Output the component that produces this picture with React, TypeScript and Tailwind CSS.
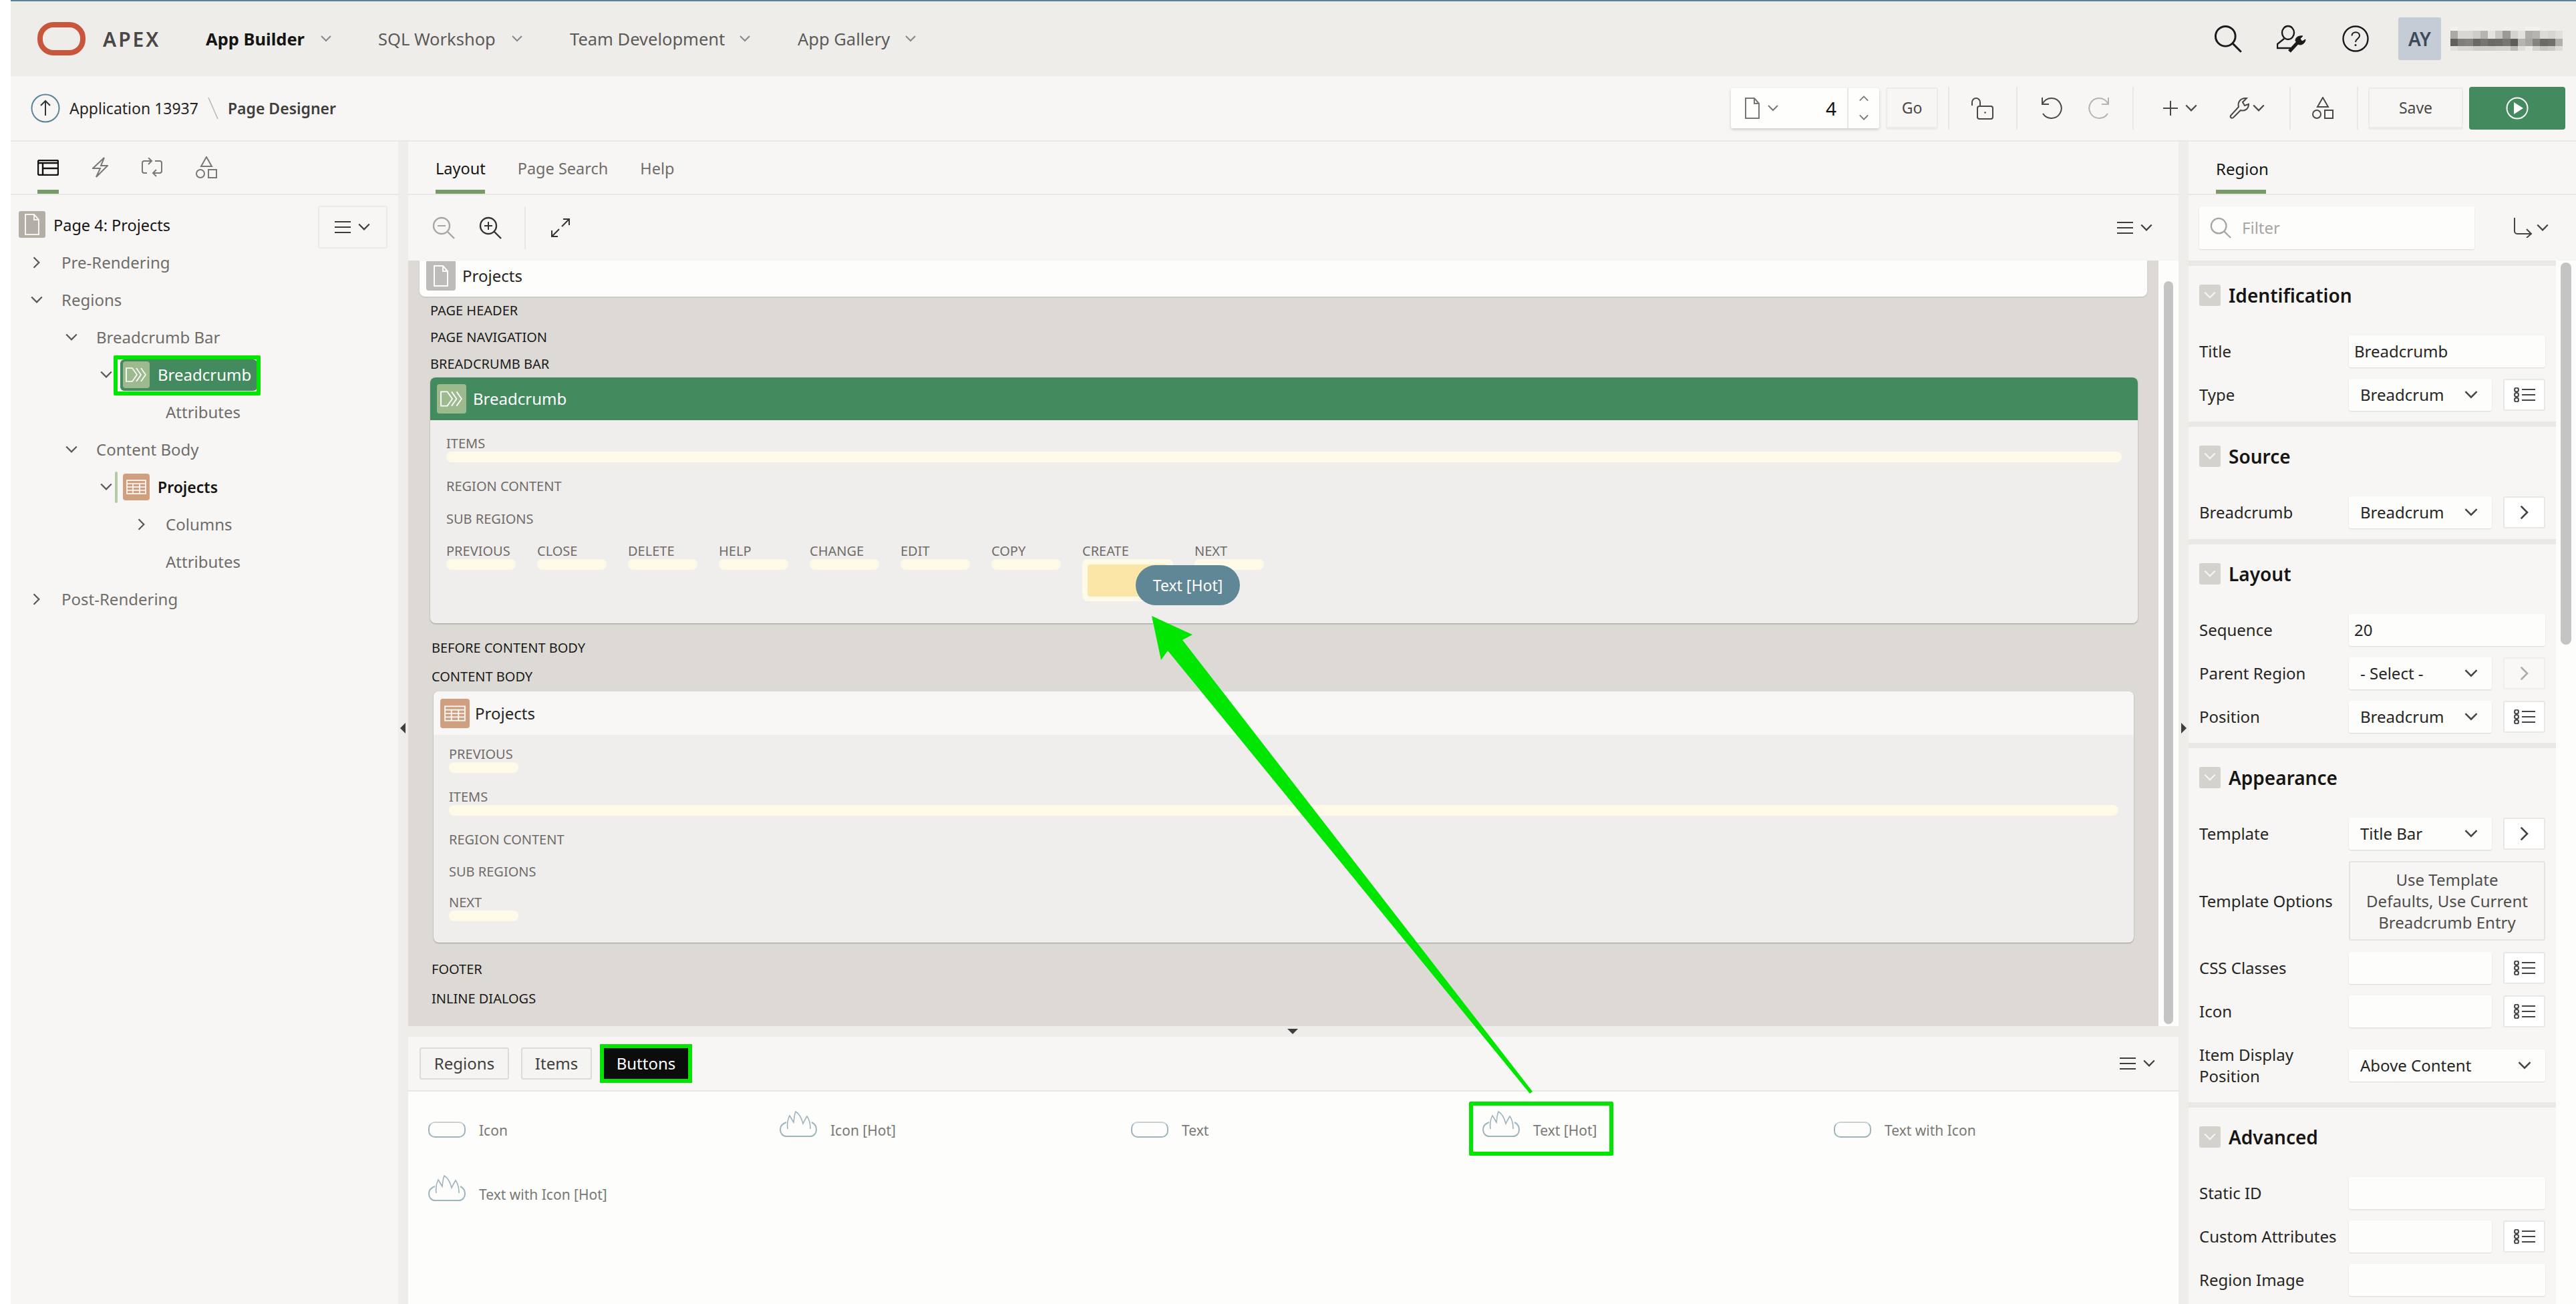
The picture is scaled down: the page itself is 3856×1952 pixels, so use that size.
import type { ReactNode } from 'react';

const FONT = "font-['Noto_Sans','Open_Sans',sans-serif]";

const Chev = ({ dir = 'down', className = '' }: { dir?: 'down' | 'up' | 'right'; className?: string }) => {
  const pts = dir === 'down' ? '2,5 9,12 16,5' : dir === 'up' ? '2,12 9,5 16,12' : '5,2 12,9 5,16';
  return (
    <svg viewBox="0 0 18 18" className={`shrink-0 ${className}`} fill="none" stroke="currentColor" strokeWidth="2">
      <polyline points={pts} />
    </svg>
  );
};

const MenuIcon = () => (
  <span className="flex items-center gap-[10px] text-[#3f3e3c]">
    <svg viewBox="0 0 24 20" className="h-[20px] w-[24px]" stroke="currentColor" strokeWidth="2">
      <path d="M0 2h24M0 10h24M0 18h24" />
    </svg>
    <Chev className="h-[20px] w-[20px]" />
  </span>
);

const ListIcon = () => (
  <svg viewBox="0 0 32 22" className="h-[22px] w-[32px] text-[#444]" fill="none" stroke="currentColor" strokeWidth="2">
    <circle cx="4" cy="3.5" r="3" />
    <circle cx="4" cy="11" r="3" />
    <circle cx="4" cy="18.5" r="3" />
    <path d="M12 3h20M12 11h20M12 19h20" />
  </svg>
);

const FileGlyph = ({ className = '' }: { className?: string }) => (
  <svg viewBox="0 0 24 32" className={className} fill="none" stroke="currentColor" strokeWidth="2">
    <path d="M2 1h13l7 8v22H2z" />
    <path d="M15 1v8h7" />
  </svg>
);

const ChevronsGlyph = ({ className = '' }: { className?: string }) => (
  <svg viewBox="0 0 32 22" className={className} fill="none" stroke="#fff" strokeWidth="1.7">
    <path d="M10 1H1v20h9l7-10z" />
    <path d="M16 1l7 10-7 10M23 1l7 10-7 10" />
  </svg>
);

const TableGlyph = ({ className = '' }: { className?: string }) => (
  <svg viewBox="0 0 30 22" className={className} fill="none" stroke="#fff" strokeWidth="1.6">
    <rect x="1" y="1" width="28" height="20" />
    <path d="M1 6h28M1 11h28M1 16h28M10 6v15M20 6v15" />
  </svg>
);

const ShapesIcon = ({ className = '' }: { className?: string }) => (
  <svg viewBox="0 0 32 34" className={className} fill="none" stroke="currentColor" strokeWidth="2">
    <path d="M16 1l8 14H8z" />
    <circle cx="7" cy="26" r="6" />
    <rect x="19" y="20" width="12" height="12" />
  </svg>
);

const Flame = () => (
  <svg viewBox="0 0 56 40" className="h-[40px] w-[56px] shrink-0" fill="none" stroke="#9db4bc" strokeWidth="2">
    <path d="M10 17 C4 19 1 23 1 28 C1 34 5 38 10 38 H46 C51 38 55 34 55 28 C55 23 52 19 48 17" />
    <path d="M12 27 C11 20 12 13 15 7 C17 10 19 14 21 17 C22 10 22 5 24 1 C29 4 33 11 35 19 C37 15 39 11 41 8 C44 12 46 18 46 27" strokeWidth="1.6" />
  </svg>
);

const Pill = () => <span className="block h-[24px] w-[56px] shrink-0 rounded-[10px] border-2 border-[#9db4bc] border-t-[#c5d3d8]" />;

const SearchIcon = ({ className = '', children }: { className?: string; children?: ReactNode }) => (
  <svg viewBox="0 0 34 34" className={className} fill="none" stroke="currentColor" strokeWidth="2.4">
    <circle cx="14" cy="14" r="12" />
    <path d="M23 23l10 10" />
    {children}
  </svg>
);

const Divider = ({ className = '' }: { className?: string }) => <span className={`h-[64px] w-[2px] shrink-0 bg-[#e8e7e4] ${className}`} />;

const Slot = ({ label, wide }: { label: string; wide?: boolean }) => (
  <div className={`flex flex-col ${wide ? 'w-[136px]' : 'w-[104px]'}`}>
    <span className="text-[20px] leading-[24px] text-[#6f6c68]">{label}</span>
    <span className={`block rounded-[8px] bg-[#fff9e8] ${wide ? 'h-[63px] p-[8px]' : 'h-[16px]'}`}>
      {wide && <span className="block h-[48px] w-[120px] rounded-[4px] bg-[#fbe6a8]" />}
    </span>
  </div>
);

const CanvasLabel = ({ children, className = '' }: { children: ReactNode; className?: string }) => (
  <div className={`flex h-[40px] items-center text-[20px] text-[#1a1a1a] ${className}`}>{children}</div>
);

const Section = ({ title, children, className = 'pb-[16px]' }: { title: string; children: ReactNode; className?: string }) => (
  <section className={`mb-[8px] bg-[#f7f6f4] px-[16px] ${className}`}>
    <div className="flex h-[104px] items-start gap-[12px] pt-[28px]">
      <span className="flex h-[32px] w-[32px] items-center justify-center rounded-[3px] bg-[#d4d2cd] text-[#f5f4f2]">
        <Chev className="h-[20px] w-[20px]" />
      </span>
      <h2 className="text-[28px] leading-[32px] font-semibold text-[#161513]">{title}</h2>
    </div>
    <div className="flex flex-col gap-[17px]">{children}</div>
  </section>
);

type Side = 'list' | 'go' | 'goOff';

const SideBtn = ({ kind }: { kind: Side }) => (
  <span className={`flex h-[48px] w-[63px] shrink-0 items-center justify-center rounded-[3px] border-2 ${kind === 'goOff' ? 'border-[#efeeeb] bg-[#f9f8f6] text-[#aaa]' : 'border-[#e8e7e4] bg-white text-[#444]'}`}>
    {kind === 'list' ? <ListIcon /> : <Chev dir="right" className="h-[24px] w-[24px]" />}
  </span>
);

const Field = ({ label, value = '', select, side, className = 'h-[48px]' }: { label: ReactNode; value?: string; select?: boolean; side?: Side; className?: string }) => (
  <div className={`flex items-center text-[24px] ${className}`}>
    <span className="w-[224px] shrink-0 leading-[32px] text-[#262523]">{label}</span>
    <div className="flex flex-1 items-center gap-[17px]">
      <div className={`flex h-[48px] flex-1 items-center justify-between rounded-[3px] bg-[#fdfdfb] shadow-[0_1px_2px_rgba(0,0,0,0.12)] ${select ? 'pr-[20px] pl-[17px]' : 'pl-[8px]'}`}>
        <span className="text-[#262523]">{value}</span>
        {select && <Chev className="h-[22px] w-[22px] text-[#444]" />}
      </div>
      {side && <SideBtn kind={side} />}
    </div>
  </div>
);

const TreeRow = ({ indent, chev, gutter = 'w-[52px]', children }: { indent: number; chev?: 'right' | 'down'; gutter?: string; children: ReactNode }) => (
  <div className="flex h-[56px] items-center" style={{ paddingLeft: indent }}>
    <span className={`flex shrink-0 items-center ${gutter}`}>
      {chev && <Chev dir={chev} className="ml-[5px] h-[20px] w-[20px] text-[#5a5856]" />}
    </span>
    {children}
  </div>
);

const NavItem = ({ label, width, labelWidth, active }: { label: string; width: string; labelWidth: string; active?: boolean }) => (
  <div className={`flex items-center ${width}`}>
    <span className={`whitespace-nowrap ${labelWidth} ${active ? 'font-bold text-[#161513]' : 'text-[#5c5a57]'}`}>{label}</span>
    <Chev className="h-[18px] w-[18px] text-[#8a8886]" />
  </div>
);

const GalleryItem = ({ label, hot }: { label: string; hot?: boolean }) => (
  <div className="flex h-[96px] items-center gap-[20px] text-[21px] text-[#7a7875]">
    <span className="flex h-[42px] w-[56px] items-end">{hot ? <Flame /> : <Pill />}</span>
    <span className="mt-[22px]">{label}</span>
  </div>
);

// blurred user name, four rows of mosaic cells
const mosaic: { h: string; cells: string[] }[] = [
  { h: 'h-[6px]', cells: ['#f3f2ef', '#efeeeb', '#efeeeb', '#f0efec', '#efeeeb', '#eeedea', '#eeedea', '#f0efec', '#efeeeb', '#eeedea', '#f3f2ef', '#f3f2ef', '#eeedea', '#eeedea', '#eeedea'] },
  { h: 'h-[12px]', cells: ['#aaa9a5', '#d8d7d4', '#d8d7d4', '#cdccc9', '#b5b4b0', '#e4e3e0', '#c8c7c4', '#9b9a96', '#d4d3d0', '#e2e1de', '#aeada9', '#b5b4b0', '#dcdbd8', '#d6d5d2', '#e0dfdc'] },
  { h: 'h-[11px]', cells: ['#625f5c', '#807e7b', '#858380', '#6a6865', '#777572', '#6c6a67', '#6e6c69', '#787673', '#5f5d5a', '#b5b4b0', '#a8a7a3', '#858380', '#6c6a67', '#727069', '#b0afab'] },
  { h: 'h-[7px]', cells: ['#e2e1de', '#d8d7d4', '#d8d7d4', '#cfcecb', '#d0cfcc', '#d0cfcc', '#d4d3d0', '#d4d3d0', '#bcbbb7', '#e0dfdc', '#eaeae6', '#d4d3d0', '#c6c5c2', '#cdccc9', '#dedddA'] },
];

export default function App() {
  return (
    <div className={`relative flex h-[1952px] w-[3856px] flex-col overflow-hidden bg-white pl-[16px] ${FONT}`}>
      <div className="h-[2px] shrink-0 bg-[#5a8598]" />

      {/* top nav */}
      <header className="flex h-[112px] shrink-0 items-center bg-[#eeedea] pr-[20px] pl-[40px] text-[25.5px]">
        <svg viewBox="0 0 72 50" className="h-[50px] w-[72px]" fill="none" stroke="#c9553a" strokeWidth="8">
          <rect x="4" y="4" width="64" height="42" rx="20" />
        </svg>
        <span className="ml-[26px] w-[154px] text-[30px] font-semibold tracking-[3px] text-[#4a4846]">APEX</span>
        <div className="flex">
          <NavItem label="App Builder" width="w-[258px]" labelWidth="w-[171px]" active />
          <NavItem label="SQL Workshop" width="w-[287px]" labelWidth="w-[199px]" />
          <NavItem label="Team Development" width="w-[341px]" labelWidth="w-[253px]" />
          <NavItem label="App Gallery" width="w-[180px]" labelWidth="w-[160px]" />
        </div>
        <div className="ml-auto flex items-center text-[#1b1a18]">
          <SearchIcon className="h-[42px] w-[42px]" />
          <svg viewBox="0 0 44 42" className="ml-[52px] h-[42px] w-[44px]" fill="none" stroke="currentColor" strokeWidth="2.4">
            <ellipse cx="17" cy="12" rx="9" ry="10" />
            <path d="M11 21L1 29v6h20" />
            <path d="M19 40L32 26" strokeWidth="5" />
            <path d="M28 24C28 19 33 16 39 17L35 21L38 25L43 22C43 28 36 32 32 29z" fill="currentColor" strokeWidth="1" />
          </svg>
          <svg viewBox="0 0 40 40" className="ml-[54px] h-[40px] w-[40px]" fill="none" stroke="currentColor" strokeWidth="2.4">
            <circle cx="20" cy="20" r="18.5" />
            <path d="M14.5 15.5c0-7 11.5-7 11.5 0 0 4.5-6 4.5-6 9.5" strokeWidth="2" />
            <circle cx="20" cy="29.5" r="1.5" fill="currentColor" stroke="none" />
          </svg>
          <span className="ml-[44px] flex h-[64px] w-[64px] items-center justify-center rounded-[3px] bg-[#c5ccd5] text-[28px] font-semibold text-[#3d4a5a]">AY</span>
          <span className="ml-[14px] flex w-[168px] flex-col">
            {mosaic.map((row, r) => (
              <span key={r} className={`flex ${row.h}`}>
                {row.cells.map((c, i) => (
                  <span key={i} className="h-full flex-1" style={{ background: c }} />
                ))}
              </span>
            ))}
          </span>
        </div>
      </header>

      {/* page designer toolbar */}
      <div className="flex h-[98px] shrink-0 items-center border-b-2 border-[#e8e7e4] bg-[#f7f6f4] pr-[16px] pl-[30px] text-[23px]">
        <svg viewBox="0 0 44 44" className="h-[44px] w-[44px]" fill="none" strokeWidth="2">
          <circle cx="22" cy="22" r="20.5" stroke="#5a8598" />
          <path d="M22 33V11M15 18l7-7 7 7" stroke="#333" />
        </svg>
        <span className="ml-[14px] text-[#262523]">Application 13937</span>
        <svg viewBox="0 0 16 32" className="mx-[14px] h-[32px] w-[16px]" stroke="#b9b7b3" strokeWidth="1.5">
          <path d="M1 0l14 32" />
        </svg>
        <span className="font-semibold text-[#3f3e3c]">Page Designer</span>

        <div className="ml-auto flex items-center text-[#4a4846]">
          <div className="flex h-[60px] w-[222px] items-center rounded-[3px] bg-[#fefefd] shadow-[0_2px_4px_rgba(0,0,0,0.18)]">
            <FileGlyph className="ml-[20px] h-[32px] w-[24px] text-[#777]" />
            <Chev className="ml-[10px] h-[18px] w-[18px] text-[#777]" />
            <span className="mr-[16px] ml-auto text-[28px] text-[#111]">4</span>
            <span className="flex h-full w-[48px] flex-col items-center justify-center gap-[12px] border-l-2 border-[#e8e7e4] text-[#777]">
              <Chev dir="up" className="h-[16px] w-[16px]" />
              <Chev className="h-[16px] w-[16px]" />
            </span>
          </div>
          <button className="ml-[10px] h-[63px] w-[78px] rounded-[3px] border-2 border-b-4 border-[#ecebe8] text-[23px]">Go</button>
          <Divider className="ml-[15px]" />
          <svg viewBox="0 0 33 33" className="ml-[33px] h-[33px] w-[33px]" fill="none" stroke="currentColor" strokeWidth="2">
            <rect x="9" y="13" width="23" height="19" rx="3" />
            <path d="M1 12V7a6 6 0 0 1 12 0v6" />
            <circle cx="20.5" cy="22.5" r="1.3" fill="currentColor" stroke="none" />
          </svg>
          <Divider className="ml-[34px]" />
          <svg viewBox="0 0 32 32" className="ml-[36px] h-[32px] w-[32px]" fill="none" stroke="currentColor" strokeWidth="2">
            <path d="M1 10C4 4 9 1 15 1A15 15 0 1 1 2 24" />
            <path d="M1 0v10h10" />
          </svg>
          <svg viewBox="0 0 32 32" className="ml-[37px] h-[32px] w-[32px] text-[#b5b3b0]" fill="none" stroke="currentColor" strokeWidth="2">
            <path d="M31 10C28 4 23 1 17 1A15 15 0 1 0 30 24" />
            <path d="M31 0v10H21" />
          </svg>
          <Divider className="ml-[35px]" />
          <svg viewBox="0 0 22 22" className="ml-[44px] h-[22px] w-[22px]" stroke="currentColor" strokeWidth="2">
            <path d="M11 0v22M0 11h22" />
          </svg>
          <Chev className="ml-[10px] h-[20px] w-[20px]" />
          <svg viewBox="0 0 30 34" className="ml-[47px] h-[34px] w-[30px]" fill="none" stroke="currentColor" strokeWidth="2">
            <path d="M3 27L14 15C12 8 17 1 26 2L20 8L23 13L29 11C29 18 23 22 17 20L6 31C3 33 0 30 3 27z" />
          </svg>
          <Chev className="ml-[4px] h-[20px] w-[20px]" />
          <Divider className="ml-[36px]" />
          <ShapesIcon className="ml-[32px] h-[34px] w-[32px]" />
          <Divider className="ml-[35px]" />
          <button className="ml-[15px] h-[63px] w-[142px] rounded-[3px] border-2 border-b-4 border-[#ecebe8] text-[23px]">Save</button>
          <span className="ml-[9px] flex h-[64px] w-[144px] items-center justify-center rounded-[4px] bg-[#438a5e]">
            <svg viewBox="0 0 34 34" className="h-[34px] w-[34px]" fill="none" stroke="#fff" strokeWidth="2">
              <circle cx="17" cy="17" r="15.5" />
              <path d="M12 8l14 9-14 9z" fill="#fff" stroke="none" />
            </svg>
          </span>
        </div>
      </div>

      {/* three panes */}
      <div className="flex min-h-0 flex-1 bg-[#eeedea]">
        {/* left: tree */}
        <aside className="flex w-[580px] shrink-0 flex-col bg-[#f7f6f4]">
          <div className="relative flex h-[80px] shrink-0 items-center gap-[50px] border-b-2 border-[#e8e7e4] pl-[40px] text-[#7a7875]">
            <svg viewBox="0 0 32 24" className="h-[24px] w-[32px] text-[#111]" fill="none" stroke="currentColor" strokeWidth="2.4">
              <rect x="1" y="1" width="30" height="22" rx="2" />
              <path d="M1 5h30M8 5v18M8 13h23" />
            </svg>
            <svg viewBox="0 0 24 32" className="h-[32px] w-[24px]" fill="none" stroke="currentColor" strokeWidth="2">
              <path d="M18 1L1 17H12L6 30L23 13H13z" />
            </svg>
            <svg viewBox="0 0 31 31" className="h-[31px] w-[31px]" fill="none" stroke="currentColor" strokeWidth="2">
              <path d="M15 5H4a3 3 0 0 0-3 3V20a3 3 0 0 0 3 3H8M10 0l5 5-5 5M20 5H27a3 3 0 0 1 3 3V20a3 3 0 0 1-3 3H17M22 18l-5 5 5 5" />
            </svg>
            <ShapesIcon className="h-[34px] w-[32px]" />
            <span className="absolute bottom-0 left-[40px] h-[6px] w-[32px] bg-[#789a68]" />
          </div>
          <div className="flex h-[73px] shrink-0 items-start justify-between pt-[16px] pr-[16px] pl-[12px]">
            <div className="flex items-center gap-[12px] pt-[8px]">
              <span className="flex h-[40px] w-[40px] items-center justify-center rounded-[3px] bg-[#b3aea6] text-[#f5f4f2]">
                <FileGlyph className="h-[32px] w-[24px]" />
              </span>
              <span className="mt-[4px] text-[23.5px] text-[#161513]">Page 4: Projects</span>
            </div>
            <span className="flex h-[64px] w-[104px] shrink-0 items-center justify-center rounded-[3px] border-2 border-[#ecebe8]">
              <MenuIcon />
            </span>
          </div>
          <nav className="text-[24px] text-[#6f6d6a]">
            <TreeRow indent={24} chev="right">Pre-Rendering</TreeRow>
            <TreeRow indent={24} chev="down">Regions</TreeRow>
            <TreeRow indent={76} chev="down">Breadcrumb Bar</TreeRow>
            <TreeRow indent={128} chev="down" gutter="w-[36px]">
              <div className="relative flex h-[47px] w-[205px] items-center rounded-[6px] bg-[#438a5e] pl-[4px] text-white">
                <span className="mr-[12px] flex h-[40px] w-[40px] items-center justify-center rounded-[4px] bg-[#9dba8e]">
                  <ChevronsGlyph className="h-[22px] w-[32px]" />
                </span>
                Breadcrumb
                <span className="absolute -top-[6px] -right-[5px] -bottom-[7px] -left-[10px] rounded-[2px] border-[6px] border-[#00e600]" />
              </div>
            </TreeRow>
            <TreeRow indent={180}>Attributes</TreeRow>
            <TreeRow indent={76} chev="down">Content Body</TreeRow>
            <TreeRow indent={128} chev="down" gutter="w-[36px]">
              <div className="flex h-[47px] items-center text-[23px] font-semibold text-[#161513]">
                <span className="mr-[8px] -ml-[8px] h-[47px] w-[4px] rounded-[2px] bg-[#b4cba8]" />
                <span className="mr-[12px] flex h-[40px] w-[40px] items-center justify-center rounded-[4px] bg-[#cf9f80]">
                  <TableGlyph className="h-[22px] w-[30px]" />
                </span>
                Projects
              </div>
            </TreeRow>
            <TreeRow indent={180}>
              <Chev dir="right" className="mr-[26px] -ml-[46px] h-[20px] w-[20px] text-[#5a5856]" />
              Columns
            </TreeRow>
            <TreeRow indent={180}>Attributes</TreeRow>
            <TreeRow indent={24} chev="right">Post-Rendering</TreeRow>
          </nav>
        </aside>

        {/* left gutter */}
        <div className="relative w-[15px] shrink-0">
          <span className="absolute top-[870px] left-[3px] h-0 w-0 border-y-[8px] border-r-[8px] border-y-transparent border-r-[#3f3e3c]" />
        </div>

        {/* center */}
        <main className="flex min-w-0 flex-1 flex-col">
          <div className="relative flex h-[80px] shrink-0 items-center gap-[48px] border-b-2 border-[#e8e7e4] bg-[#f7f6f4] pl-[41px] text-[23.5px] text-[#6f6d6a]">
            <span className="mt-[4px] text-[#161513]">Layout</span>
            <span className="mt-[4px]">Page Search</span>
            <span className="mt-[4px]">Help</span>
            <span className="absolute bottom-0 left-[41px] h-[6px] w-[74px] bg-[#789a68]" />
          </div>
          <div className="flex h-[98px] shrink-0 items-center bg-[#f7f6f4] pr-[38px] pl-[36px]">
            <SearchIcon className="h-[34px] w-[34px] text-[#a8a6a3]">
              <path d="M8 14h12" strokeWidth="2" />
            </SearchIcon>
            <SearchIcon className="ml-[36px] h-[34px] w-[34px] text-[#333]">
              <path d="M8 14h12M14 8v12" strokeWidth="2" />
            </SearchIcon>
            <span className="ml-[34px] h-[64px] w-[2px] bg-[#e8e7e4]" />
            <svg viewBox="0 0 28 28" className="ml-[38px] h-[28px] w-[28px] text-[#333]" fill="none" stroke="currentColor" strokeWidth="2">
              <path d="M16 12L27 1M18 1h9v9M12 16L1 27M10 27H1v-9" />
            </svg>
            <span className="ml-auto"><MenuIcon /></span>
          </div>

          {/* canvas with scrollbar */}
          <div className="flex h-[1146px] shrink-0 bg-[#fdfdfb]">
            <div className="flex-1 bg-[#dddad5] px-[17px]">
              <div className="flex h-[54px] items-center gap-[10px] rounded-b-[8px] bg-[#fdfdfb] pb-[8px] shadow-[0_1px_2px_rgba(0,0,0,0.15)]">
                <span className="ml-[10px] flex h-[44px] w-[44px] items-center justify-center rounded-b-[4px] bg-[#bdbcb9] text-white">
                  <FileGlyph className="h-[34px] w-[24px]" />
                </span>
                <span className="text-[24px] text-[#262523]">Projects</span>
              </div>
              <div className="pr-[14px] pl-[16px]">
                <CanvasLabel className="mt-[1px]">PAGE HEADER</CanvasLabel>
                <CanvasLabel>PAGE NAVIGATION</CanvasLabel>
                <CanvasLabel>BREADCRUMB BAR</CanvasLabel>

                <div className="overflow-hidden rounded-[8px] bg-[#efeeec] shadow-[0_1px_2px_rgba(0,0,0,0.3)]">
                  <div className="flex h-[64px] items-center bg-[#438a5e] pl-[10px] text-[24px] text-white">
                    <span className="mr-[10px] flex h-[44px] w-[44px] items-center justify-center rounded-[4px] bg-[#9dba8e]">
                      <ChevronsGlyph className="h-[24px] w-[34px]" />
                    </span>
                    Breadcrumb
                  </div>
                  <div className="h-[304px] px-[24px] pt-[23px] text-[20px] leading-[24px] text-[#6f6c68]">
                    <div>ITEMS</div>
                    <div className="h-[16px] rounded-[8px] bg-[#fff9e8]" />
                    <div className="mt-[24px]">REGION CONTENT</div>
                    <div className="mt-[25px]">SUB REGIONS</div>
                    <div className="mt-[24px] flex gap-[32px]">
                      {['PREVIOUS', 'CLOSE', 'DELETE', 'HELP', 'CHANGE', 'EDIT', 'COPY'].map(s => (
                        <Slot key={s} label={s} />
                      ))}
                      <Slot label="CREATE" wide />
                      <Slot label="NEXT" />
                    </div>
                  </div>
                </div>

                <CanvasLabel className="mt-[17px] pl-[2px]">BEFORE CONTENT BODY</CanvasLabel>
                <CanvasLabel className="mt-[3px] pl-[2px]">CONTENT BODY</CanvasLabel>

                <div className="mt-[2px] mr-[6px] ml-[5px] overflow-hidden rounded-[8px] bg-[#efeeec] shadow-[0_1px_2px_rgba(0,0,0,0.3)]">
                  <div className="flex h-[65px] items-center bg-[#f8f7f5] pl-[10px] text-[24px] text-[#262523]">
                    <span className="mr-[8px] flex h-[44px] w-[44px] items-center justify-center rounded-[4px] bg-[#cf9f80]">
                      <TableGlyph className="h-[24px] w-[32px]" />
                    </span>
                    Projects
                  </div>
                  <div className="h-[311px] px-[23px] pt-[17px] text-[20px] leading-[24px] text-[#6f6c68]">
                    <div>PREVIOUS</div>
                    <div className="h-[16px] w-[104px] rounded-[8px] bg-[#fff9e8]" />
                    <div className="mt-[24px]">ITEMS</div>
                    <div className="h-[16px] rounded-[8px] bg-[#fff9e8]" />
                    <div className="mt-[24px]">REGION CONTENT</div>
                    <div className="mt-[24px]">SUB REGIONS</div>
                    <div className="mt-[22px]">NEXT</div>
                    <div className="h-[16px] w-[104px] rounded-[8px] bg-[#fff9e8]" />
                  </div>
                </div>

                <CanvasLabel className="mt-[20px] pl-[2px]">FOOTER</CanvasLabel>
                <CanvasLabel className="mt-[4px] pl-[2px]">INLINE DIALOGS</CanvasLabel>
              </div>
            </div>
            <div className="flex w-[30px] shrink-0 justify-center pt-[31px]">
              <span className="h-[1112px] w-[14px] rounded-[7px] bg-[#c4c4c4]" />
            </div>
          </div>

          {/* splitter */}
          <div className="flex h-[16px] shrink-0 items-center justify-center">
            <span className="-ml-[2px] h-0 w-0 border-x-[8px] border-t-[8px] border-x-transparent border-t-[#3f3e3c]" />
          </div>

          {/* gallery */}
          <div className="flex h-[82px] shrink-0 items-center gap-[18px] border-b-2 border-[#e8e7e4] bg-[#f7f6f4] pr-[34px] pl-[17px] text-[24px]">
            <span className="flex h-[48px] w-[134px] items-center justify-center rounded-[3px] border-2 border-[#dcdbd8] bg-[#f5f4f2] text-[#3f3e3c]">Regions</span>
            <span className="flex h-[48px] w-[106px] items-center justify-center rounded-[3px] border-2 border-[#dcdbd8] bg-[#f5f4f2] text-[#3f3e3c]">Items</span>
            <span className="-ml-[6px] flex h-[58px] w-[138px] items-center justify-center border-[6px] border-[#00e600] bg-[#0c0c0c] text-white">Buttons</span>
            <span className="ml-auto"><MenuIcon /></span>
          </div>
          <div className="grid flex-1 grid-cols-[repeat(5,526px)] content-start bg-[#fdfdfb] pl-[30px]">
            <GalleryItem label="Icon" />
            <GalleryItem label="Icon [Hot]" hot />
            <GalleryItem label="Text" />
            <div className="relative">
              <GalleryItem label="Text [Hot]" hot />
              <span className="absolute top-[15px] bottom-0 left-[-20px] w-[216px] rounded-[2px] border-[6px] border-[#00e600]" />
            </div>
            <GalleryItem label="Text with Icon" />
            <GalleryItem label="Text with Icon [Hot]" hot />
          </div>
        </main>

        {/* right gutter */}
        <div className="relative w-[15px] shrink-0">
          <span className="absolute top-[870px] left-[4px] h-0 w-0 border-y-[8px] border-l-[8px] border-y-transparent border-l-[#3f3e3c]" />
        </div>

        {/* right: property editor */}
        <aside className="flex w-[580px] shrink-0 flex-col bg-[#fdfdfb]">
          <div className="relative flex h-[80px] shrink-0 items-center border-b-2 border-[#e8e7e4] bg-[#f7f6f4] pl-[41px] text-[24px] text-[#161513]">
            <span className="mt-[4px]">Region</span>
            <span className="absolute bottom-0 left-[41px] h-[6px] w-[75px] bg-[#789a68]" />
          </div>
          <div className="flex h-[98px] shrink-0 items-center bg-[#f7f6f4] pl-[16px]">
            <div className="flex h-[64px] w-[412px] items-center gap-[16px] rounded-[3px] bg-[#fdfdfb] pl-[16px] text-[24px] text-[#a8a6a3] shadow-[0_1px_2px_rgba(0,0,0,0.12)]">
              <SearchIcon className="h-[32px] w-[32px]" />
              Filter
            </div>
            <svg viewBox="0 0 30 30" className="ml-[58px] h-[30px] w-[30px] text-[#444]" fill="none" stroke="currentColor" strokeWidth="2">
              <path d="M2 0v20a4 4 0 0 0 4 4h20M20 17l7 7-7 6" />
            </svg>
            <Chev className="ml-[4px] h-[20px] w-[20px] text-[#444]" />
          </div>
          <div className="flex min-h-0 flex-1 overflow-hidden">
            <div className="w-[550px] shrink-0 bg-[#e9e8e5] pt-[8px]">
              <Section title="Identification">
                <Field label="Title" value="Breadcrumb" />
                <Field label="Type" value="Breadcrum" select side="list" />
              </Section>
              <Section title="Source">
                <Field label="Breadcrumb" value="Breadcrum" select side="go" />
              </Section>
              <Section title="Layout" className="pb-[15px]">
                <Field label="Sequence" value="20" />
                <Field label="Parent Region" value="- Select -" select side="goOff" />
                <Field label="Position" value="Breadcrum" select side="list" />
              </Section>
              <Section title="Appearance" className="pb-[15px]">
                <Field label="Template" value="Title Bar" select side="go" />
                <div className="flex h-[119px] items-center text-[24px]">
                  <span className="w-[224px] shrink-0 text-[#262523]">Template Options</span>
                  <div className="flex h-full flex-1 items-center justify-center rounded-[3px] border-2 border-[#e4e3e0] px-[24px] text-center leading-[32px] text-[#4f4e4c]">
                    Use Template Defaults, Use Current Breadcrumb Entry
                  </div>
                </div>
                <Field label="CSS Classes" side="list" />
                <Field label="Icon" side="list" />
                <Field label={<>Item Display<br />Position</>} value="Above Content" select className="h-[80px]" />
              </Section>
              <Section title="Advanced">
                <Field label="Static ID" />
                <Field label="Custom Attributes" side="list" />
                <Field label="Region Image" />
              </Section>
            </div>
            <div className="flex flex-1 justify-center pt-[3px]">
              <span className="h-[572px] w-[16px] rounded-[8px] bg-[#c4c4c4]" />
            </div>
          </div>
        </aside>
      </div>

      {/* callouts over the canvas */}
      <span className="absolute top-[846px] left-[1700px] flex h-[60px] w-[156px] items-center justify-center rounded-[30px] bg-[#5f8795] text-[23px] text-white">Text [Hot]</span>
      <svg viewBox="0 0 3856 1952" className="pointer-events-none absolute inset-0 h-[1952px] w-[3856px]">
        <polygon points="1724,922 1785,950 1770,958 2294,1634 2290,1637 1748,974 1738,988" fill="#00e600" />
      </svg>
    </div>
  );
}
